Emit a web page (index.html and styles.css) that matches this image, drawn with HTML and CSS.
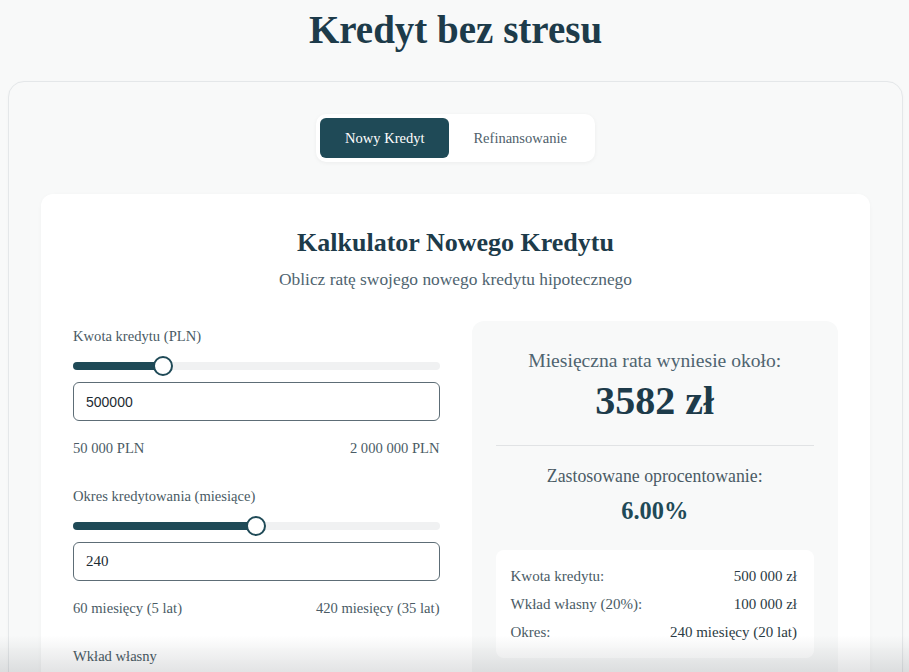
FILE: index.html
```html
<!DOCTYPE html>
<html lang="pl">
<head>
<meta charset="utf-8">
<title>Kredyt bez stresu</title>
<link rel="stylesheet" href="styles.css">
</head>
<body>
<div class="page">
  <h1 class="title">Kredyt bez stresu</h1>
  <div class="shell">
    <div class="tabs-wrap">
      <div class="tabs">
        <button class="tab tab-active">Nowy Kredyt</button>
        <button class="tab">Refinansowanie</button>
      </div>
    </div>
    <div class="card">
      <h2 class="card-title">Kalkulator Nowego Kredytu</h2>
      <p class="card-sub">Oblicz ratę swojego nowego kredytu hipotecznego</p>
      <div class="grid">
        <div class="inputs">
          <div class="field">
            <div class="label">Kwota kredytu (PLN)</div>
            <div class="slider"><div class="fill" style="width: calc(10px + 0.2308 * (100% - 20px))"></div><div class="thumb" style="left: calc(0.2308 * (100% - 20px))"></div></div>
            <input class="num num-sans" type="text" value="500000">
            <div class="range"><span>50 000 PLN</span><span>2 000 000 PLN</span></div>
          </div>
          <div class="field">
            <div class="label">Okres kredytowania (miesiące)</div>
            <div class="slider"><div class="fill" style="width: calc(10px + 0.5 * (100% - 20px))"></div><div class="thumb" style="left: calc(0.5 * (100% - 20px))"></div></div>
            <input class="num" type="text" value="240">
            <div class="range"><span>60 miesięcy (5 lat)</span><span>420 miesięcy (35 lat)</span></div>
          </div>
          <div class="field">
            <div class="label">Wkład własny</div>
          </div>
        </div>
        <div class="result">
          <div class="res-label">Miesięczna rata wyniesie około:</div>
          <div class="res-value">3582 zł</div>
          <div class="divider"></div>
          <div class="rate-label">Zastosowane oprocentowanie:</div>
          <div class="rate-value">6.00%</div>
          <div class="details">
            <div class="row"><span>Kwota kredytu:</span><span class="val">500 000 zł</span></div>
            <div class="row"><span>Wkład własny (20%):</span><span class="val">100 000 zł</span></div>
            <div class="row"><span>Okres:</span><span class="val">240 miesięcy (20 lat)</span></div>
          </div>
        </div>
      </div>
    </div>
  </div>
</div>
<div class="fade"></div>
</body>
</html>
```

FILE: styles.css
```css
* { box-sizing: border-box; }
html, body { margin: 0; padding: 0; }
body {
  background: #f8f9f9;
  font-family: "Liberation Serif", "Times New Roman", serif;
  color: #4a5b65;
  overflow: hidden;
}
.page { padding: 0 6px 0 8px; }
.title {
  margin: 6px 0 27px;
  line-height: 48px;
  font-size: 39px;
  font-weight: 700;
  text-align: center;
  color: #1d3b4a;
}
.shell {
  background: #f8f9f9;
  border: 1px solid #e4e7e9;
  border-radius: 16px;
  padding: 32px;
  box-shadow: 0 1px 3px rgba(0,0,0,0.03);
}
.tabs-wrap { display: flex; justify-content: center; margin-bottom: 32px; }
.tabs {
  display: flex;
  background: #fff;
  padding: 4px;
  border-radius: 10px;
  box-shadow: 0 1px 4px rgba(0,0,0,0.05);
}
.tab {
  height: 40px;
  border: 0;
  background: transparent;
  font-family: inherit;
  font-size: 14.5px;
  color: #4f616b;
  padding: 0 24px;
  border-radius: 6px;
}
.tab-active { background: #1f4a57; color: #fff; padding: 0 25px; }
.card {
  background: #fff;
  border-radius: 12px;
  padding: 32px;
  box-shadow: 0 1px 4px rgba(0,0,0,0.03);
}
.card-title {
  margin: 0 0 7px;
  font-size: 26px;
  line-height: 34px;
  text-align: center;
  color: #1d3b4a;
  font-weight: 700;
}
.card-sub {
  margin: 0 0 30px;
  font-size: 17.4px;
  line-height: 24px;
  text-align: center;
  color: #4f6470;
}
.grid { display: grid; grid-template-columns: 1fr 1fr; gap: 32px; }
.inputs { padding-top: 5px; display: flex; flex-direction: column; gap: 28px; }
.label { font-size: 14.6px; line-height: 20px; color: #4a5b65; }
.slider {
  position: relative;
  height: 8px;
  margin: 16px 0 12px;
  background: #f0f1f2;
  border-radius: 4px;
}
.fill { height: 8px; background: #1f4a57; border-radius: 4px; }
.thumb {
  position: absolute;
  top: -6px;
  width: 20px;
  height: 20px;
  border-radius: 50%;
  background: #fff;
  border: 2px solid #1f4a57;
}
.num {
  display: block;
  width: 100%;
  height: 39px;
  border: 1px solid #5d6d76;
  border-radius: 6px;
  padding: 0 12px;
  font-family: "Liberation Serif", "Times New Roman", serif;
  font-size: 15px;
  color: #1d2b33;
  background: #fff;
}
.num-sans { font-family: "Liberation Sans", Arial, sans-serif; font-size: 14px; }
.range {
  display: flex;
  justify-content: space-between;
  margin-top: 17px;
  font-size: 14.6px;
  line-height: 20px;
  color: #4a5b65;
}
.result {
  background: #f8f9f9;
  border-radius: 12px;
  padding: 24px;
  text-align: center;
}
.res-label { font-size: 19.6px; line-height: 32px; color: #4f6470; }
.res-value { font-size: 40px; line-height: 48px; font-weight: 700; color: #1d3b4a; }
.divider { height: 1px; background: #e1e3e5; margin: 20px 0 17px; }
.rate-label { font-size: 17.8px; line-height: 26px; color: #4a5b65; }
.rate-value { margin-top: 6px; font-size: 24.4px; line-height: 32px; font-weight: 700; color: #1f4a57; }
.details {
  margin-top: 23px;
  background: #fff;
  border-radius: 8px;
  padding: 16px 17px 16px 15px;
  display: flex;
  flex-direction: column;
  gap: 8px;
  text-align: left;
}
.row {
  display: flex;
  justify-content: space-between;
  font-size: 15px;
  line-height: 20px;
  color: #4a5b65;
}
.row .val { color: #2b3b44; }
.fade {
  position: fixed;
  left: 0;
  right: 0;
  bottom: 0;
  height: 36px;
  background: linear-gradient(to bottom, rgba(255,255,255,0), #e2e3e4);
  mix-blend-mode: multiply;
  pointer-events: none;
}
```
